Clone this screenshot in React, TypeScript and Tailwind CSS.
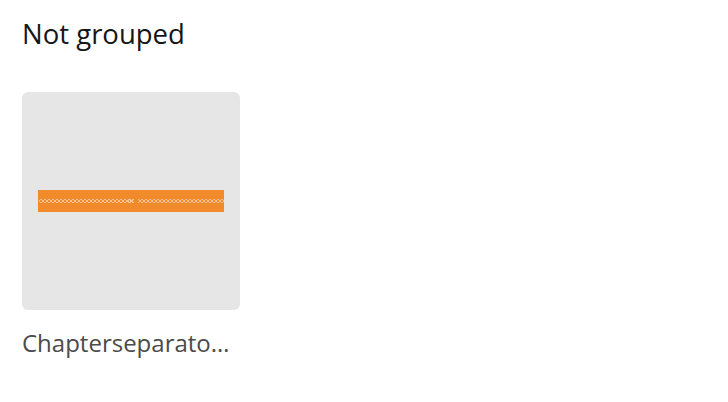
import React from "react";

function Separator() {
  const left = Array.from({ length: 24 }, (_, i) => i);
  const right = Array.from({ length: 24 }, (_, i) => i);
  return (
    <svg width="186" height="22" viewBox="0 0 186 22" className="block">
      <rect width="186" height="22" fill="#f08a2b" />
      {left.map((i) => (
        <path key={"l" + i} d={`M${1 + i * 4} 11 l2 -2 l2 2 l-2 2 z`} fill="none" stroke="#f9caa0" strokeWidth="0.9" />
      ))}
      {right.map((i) => (
        <path key={"r" + i} d={`M${90 + i * 4} 11 l2 -2 l2 2 l-2 2 z`} fill="none" stroke="#f9caa0" strokeWidth="0.9" />
      ))}
      <rect x="96" y="8" width="4" height="6" fill="#f08a2b" />
    </svg>
  );
}

export default function App() {
  return (
    <div className="w-[728px] h-[402px] bg-white px-[22px] pt-[16px]" style={{ fontFamily: '"Open Sans", sans-serif' }}>
      <h1 className="text-[27.5px] leading-[36px] text-[#161616]">Not grouped</h1>
      <div className="mt-[40px] w-[218px]">
        <div className="w-[218px] h-[218px] rounded-[6px] bg-[#e6e6e6] flex items-center justify-center">
          <Separator />
        </div>
        <p className="mt-[17px] w-[212px] text-[24px] leading-[32px] text-[#4b4b4b] truncate" title="Chapterseparator.png">
          Chapterseparator.png
        </p>
      </div>
    </div>
  );
}
